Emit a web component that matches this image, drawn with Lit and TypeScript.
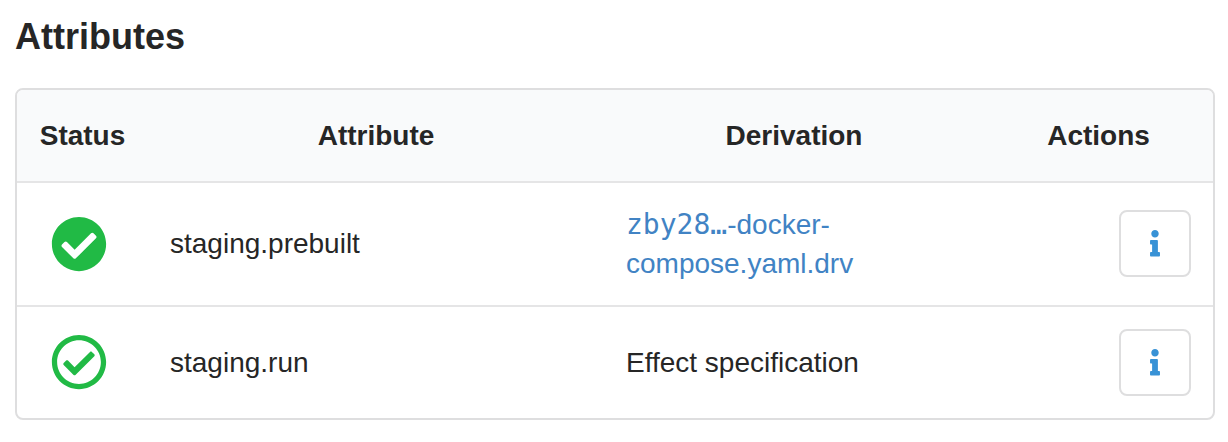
import { LitElement, html, css, svg } from "lit";
import { customElement } from "lit/decorators.js";

const solidCheck = svg`<path d="M504 256c0 136.967-111.033 248-248 248S8 392.967 8 256 119.033 8 256 8s248 111.033 248 248zM227.314 387.314l184-184c6.248-6.248 6.248-16.379 0-22.627l-22.627-22.627c-6.248-6.249-16.379-6.249-22.628 0L216 308.118l-70.059-70.059c-6.248-6.248-16.379-6.248-22.628 0l-22.627 22.627c-6.248 6.248-6.248 16.379 0 22.627l104 104c6.249 6.249 16.379 6.249 22.628.001z"/>`;
const outlineCheck = svg`<path d="M256 8C119.033 8 8 119.033 8 256s111.033 248 248 248 248-111.033 248-248S392.967 8 256 8zm0 48c110.532 0 200 89.451 200 200 0 110.532-89.451 200-200 200-110.532 0-200-89.451-200-200 0-110.532 89.451-200 200-200m140.204 130.267l-22.536-22.718c-4.667-4.705-12.265-4.736-16.97-.068L215.346 303.697l-59.792-60.277c-4.667-4.705-12.265-4.736-16.97-.069l-22.719 22.536c-4.705 4.667-4.736 12.265-.068 16.971l90.781 91.516c4.667 4.705 12.265 4.736 16.97.068l172.589-171.204c4.704-4.668 4.734-12.266.067-16.971z"/>`;

@customElement("app-root")
export class AppRoot extends LitElement {
  static styles = css`
    :host {
      display: block;
      padding: 0 13px 22px 15px;
      font: 28px/40px "Liberation Sans", Arial, sans-serif;
      color: #262626;
      background: #fff;
    }
    h2 { margin: 0; padding: 14px 0 28px; font-size: 36px; line-height: 46px; }
    .table { border: 2px solid #dededf; border-radius: 8px; overflow: hidden; }
    .row {
      display: grid;
      grid-template-columns: 131px 456px 380px 229px;
      align-items: center;
      height: 122px;
      border-top: 2px solid #e5e5e6;
    }
    .row:last-child { height: 111px; }
    .row > div { padding: 0 22px; }
    .head { height: 91px; border-top: 0; background: #f9fafb; font-weight: bold; text-align: center; }
    .status { display: block; width: 56px; height: 56px; margin-left: 12px; fill: #21ba45; }
    .row:last-child .status { margin-bottom: 1px; }
    .link { color: #4183c4; text-decoration: none; }
    .link code { font: 28px/38px "DejaVu Sans Mono", monospace; }
    .drv { line-height: 39px; }
    button {
      display: flex;
      align-items: center;
      justify-content: center;
      box-sizing: border-box;
      width: 72px;
      height: 67px;
      margin: 0 0 0 auto;
      padding: 0;
      background: #fff;
      border: 2px solid #dededf;
      border-radius: 8px;
    }
    .row:nth-child(2) button { margin-bottom: 1px; }
    .info { width: 10px; height: 26.5px; fill: #3892d6; }
  `;

  private row(icon: unknown, name: string, derivation: unknown) {
    return html`<div class="row">
      <div><svg class="status" viewBox="0 0 512 512">${icon}</svg></div>
      <div>${name}</div>
      <div class="drv">${derivation}</div>
      <div>
        <button aria-label="Info">
          <svg class="info" viewBox="0 0 192 512"><path d="M20 424.229h20V279.771H20c-11.046 0-20-8.954-20-20V212c0-11.046 8.954-20 20-20h112c11.046 0 20 8.954 20 20v212.229h20c11.046 0 20 8.954 20 20V492c0 11.046-8.954 20-20 20H20c-11.046 0-20-8.954-20-20v-47.771c0-11.046 8.954-20 20-20zM96 0C56.235 0 24 32.235 24 72s32.235 72 72 72 72-32.235 72-72S135.764 0 96 0z"/></svg>
        </button>
      </div>
    </div>`;
  }

  render() {
    return html`
      <h2>Attributes</h2>
      <div class="table">
        <div class="row head"><div>Status</div><div>Attribute</div><div>Derivation</div><div>Actions</div></div>
        ${this.row(solidCheck, "staging.prebuilt", html`<a class="link"><code>zby28…</code>-docker-<br>compose.yaml.drv</a>`)}
        ${this.row(outlineCheck, "staging.run", "Effect specification")}
      </div>
    `;
  }
}
